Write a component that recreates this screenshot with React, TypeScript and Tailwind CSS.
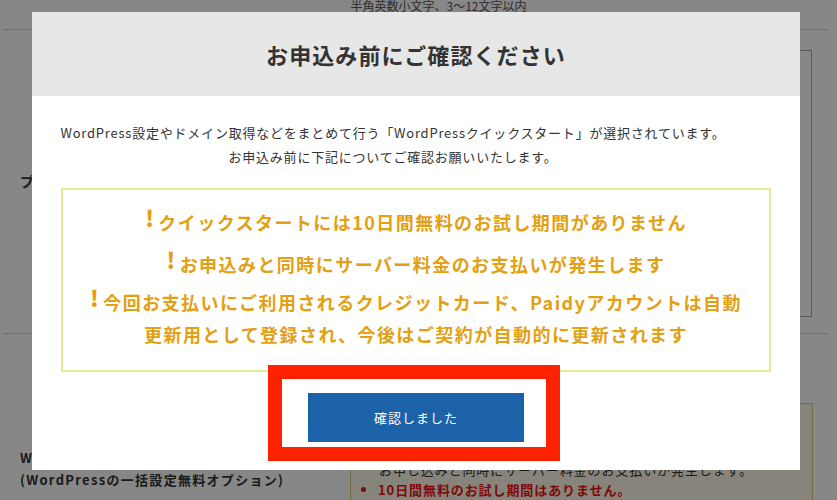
const font = "font-['Noto_Sans_CJK_JP','Noto_Sans',sans-serif]";

const Warning = ({ children, className = '' }: { children: React.ReactNode; className?: string }) => (
    <p className={`leading-[32px] whitespace-nowrap ${className}`}>
        <span className="relative -top-[3px] mr-[3px] text-[22px] font-black leading-none">!</span>
        {children}
    </p>
);

const App = () => {
    return (
        <div className={`relative h-[500px] w-[837px] overflow-hidden bg-white text-[#333] ${font}`}>
            {/* page behind the dialog */}
            <div className="ml-[3px] w-[825px]">
                <div className="h-[30px] border-b border-[#d0d0d0] text-center">
                    <p className="pl-[46px] text-[12px] leading-[12px] text-[#555]">半角英数小文字、3〜12文字以内</p>
                </div>
                <div className="flex h-[304px] border-b border-[#d0d0d0]">
                    <div className="flex w-[330px] items-center pl-[17px] text-[14px] font-bold">プラン</div>
                    <div className="mt-[20px] mb-[16px] mr-[16px] flex-1 border border-[#aaa]"></div>
                </div>
                <div className="flex">
                    <div className="w-[347px] pt-[113px] pl-[17px] text-[13px] font-bold leading-[22px] tracking-[0.1em]">
                        <p>WordPressクイックスタート</p>
                        <p>(WordPressの一括設定無料オプション)</p>
                    </div>
                    <div className="mt-[69px] mr-[15px] h-[120px] flex-1 border border-[#d8cf7a] bg-[#fffbe8] px-[12px] pt-[56px] text-[13px] leading-[20px] tracking-[0.07em]">
                        <p className="pl-[16px]">お申し込みと同時にサーバー料金のお支払いが発生します。</p>
                        <ul className="list-disc pl-[15px]">
                            <li className="font-bold text-[#ee1111]">10日間無料のお試し期間はありません。</li>
                        </ul>
                    </div>
                </div>
            </div>

            {/* dim layer */}
            <div className="absolute inset-0 bg-black/[0.47]"></div>

            {/* dialog */}
            <div className="absolute left-[32px] top-[12px] w-[768px] bg-white pb-[28px]">
                <div className="flex h-[84px] items-center justify-center bg-[#e7e7e7]">
                    <h2 className="text-[22px] font-bold tracking-[0.05em] text-[#333]">お申込み前にご確認ください</h2>
                </div>
                <div className="pt-[25px] pr-[46px] text-center text-[13px] leading-[24px] tracking-[0.06em] text-[#333]">
                    <p className="whitespace-nowrap">WordPress設定やドメイン取得などをまとめて行う「WordPressクイックスタート」が選択されています。</p>
                    <p>お申込み前に下記についてご確認お願いいたします。</p>
                </div>
                <div className="mx-[29px] mt-[19px] flex flex-col items-center border-2 border-[#ece59a] pt-[16px] pb-[20px] text-[18px] font-bold tracking-[0.08em] text-[#e2a012]">
                    <Warning className="mb-[10px]">クイックスタートには10日間無料のお試し期間がありません</Warning>
                    <Warning className="mb-[6px]">お申込みと同時にサーバー料金のお支払いが発生します</Warning>
                    <div className="text-center">
                        <Warning>今回お支払いにご利用されるクレジットカード、Paidyアカウントは自動</Warning>
                        <p className="leading-[32px]">更新用として登録され、今後はご契約が自動的に更新されます</p>
                    </div>
                </div>
                <div className="mt-[21px] flex justify-center">
                    <button className="h-[49px] w-[216px] bg-[#1b62a8] text-[13px] tracking-[0.08em] text-white">確認しました</button>
                </div>

                {/* annotation frame */}
                <div className="absolute left-[236px] top-[353px] h-[96px] w-[292px] border-[14px] border-[#ff2200]"></div>
            </div>
        </div>
    );
};

export default App;
